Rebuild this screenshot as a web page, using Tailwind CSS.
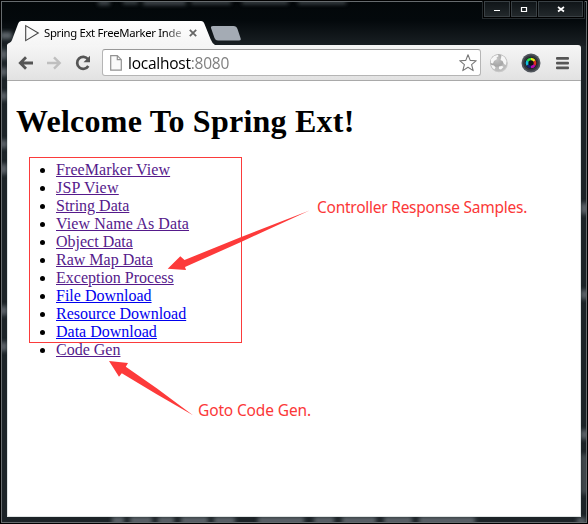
<!DOCTYPE html>
<html lang="en">
<head>
<meta charset="utf-8">
<title>Spring Ext FreeMarker Index</title>
<script src="https://cdn.jsdelivr.net/npm/@tailwindcss/browser@4"></script>
</head>
<body class="h-[524px] w-[588px] overflow-hidden bg-black">
<div class="relative flex h-[524px] w-[588px] flex-col overflow-hidden bg-[#1c2327] pr-[7px] pl-[7px]">
  <!-- glass frame -->
  <svg class="absolute inset-0" width="588" height="524" viewBox="0 0 588 524" fill="none" aria-hidden="true">
    <defs>
      <linearGradient id="top" x1="0" y1="0" x2="0" y2="1"><stop offset="0" stop-color="#030709"/><stop offset=".45" stop-color="#04090c"/><stop offset="1" stop-color="#1a2024"/></linearGradient>
      <filter id="soft" x="-50%" y="-50%" width="200%" height="200%"><feGaussianBlur stdDeviation="2"/></filter>
    </defs>
    <rect width="588" height="46" fill="url(#top)"/>
    <g filter="url(#soft)" fill="#60686d">
      <rect x="98" y="0" width="12" height="5" opacity=".7"/><rect x="123" y="0" width="15" height="4" opacity=".7"/><rect x="143" y="0" width="43" height="5" opacity=".7"/>
      <rect x="191" y="0" width="40" height="4" opacity=".7"/><rect x="242" y="0" width="46" height="4" opacity=".7"/><rect x="298" y="0" width="48" height="4" opacity=".7"/>
      <rect x="0" y="32" width="12" height="7"/><rect x="0" y="50" width="7" height="9"/><rect x="0" y="68" width="7" height="8"/><rect x="0" y="92" width="7" height="8"/>
      <rect x="0" y="140" width="7" height="8"/><rect x="0" y="164" width="7" height="10"/><rect x="0" y="306" width="7" height="9"/><rect x="0" y="342" width="7" height="9"/>
      <rect x="581" y="203" width="7" height="11"/><rect x="581" y="290" width="7" height="9"/><rect x="581" y="430" width="7" height="9"/><rect x="581" y="454" width="7" height="40" opacity=".6"/><rect x="577" y="518" width="9" height="6"/>
      <rect x="112" y="517" width="12" height="7"/><rect x="130" y="517" width="22" height="7"/><rect x="158" y="517" width="16" height="7"/><rect x="181" y="517" width="27" height="7"/><rect x="214" y="517" width="21" height="7"/><rect x="258" y="517" width="46" height="7"/><rect x="314" y="517" width="20" height="7"/><rect x="342" y="517" width="34" height="7"/><rect x="384" y="517" width="28" height="7"/><rect x="419" y="517" width="56" height="7"/>
    </g>
    <path d="M.5 0v524M587.500 0v524M0 .5h588M0 523.500h588" stroke="#000"/>
    <rect x="1.500" y="1.500" width="585" height="521" stroke="#666b6e"/>
  </svg>

  <!-- tab strip and window buttons -->
  <header class="relative flex h-[45px] shrink-0">
    <svg class="absolute top-[21px] left-0" width="236" height="24" viewBox="7 21 236 24" aria-hidden="true">
      <defs><linearGradient id="tab" x1="0" y1="0" x2="0" y2="1"><stop offset="0" stop-color="#fff"/><stop offset="1" stop-color="#f5f5f5"/></linearGradient></defs>
      <path d="M7 45q0-1.500 3-2.500c1-.5 1.500-1.500 2-2.500l6-16q1-3 3.500-3H201q2.500 0 3.500 3l6 15q1.500 4 4.500 6z" fill="url(#tab)"/>
      <path d="M213 26h20.500q3 0 4 3l3 9q1 2.500-1.500 2.500H218q-2.500 0-3.500-2.500l-3.500-10q-.5-2 2-2z" fill="#a4abb4"/>
    </svg>
    <div class="relative mt-[21px] ml-[17px] flex h-6 w-[174px] items-center">
      <svg width="16" height="18" viewBox="0 0 16 18" fill="none" stroke="#444" stroke-width="1.100"><path d="M1.700 1.600v15L14.300 9z"/></svg>
      <span class="ml-[4px] block w-[138px] bg-gradient-to-r from-black from-88% to-black/30 bg-clip-text font-['Noto_Sans',sans-serif] text-[11.3px] leading-[24px] tracking-[-0.31px] whitespace-nowrap text-transparent">Spring Ext FreeMarker Inde</span>
      <svg class="ml-[7px]" width="8" height="8" viewBox="0 0 8 8" stroke="#666" stroke-width="1.800"><path d="M.8.8l6.400 6.400M7.200.8L.8 7.200"/></svg>
    </div>
    <div class="absolute top-px left-[475px] flex h-[18px] w-[103px] gap-px border border-t-0 border-[#252b2e] bg-black p-px pt-0 [&>span]:flex [&>span]:items-center [&>span]:justify-center [&>span]:border [&>span]:border-[#394044] [&>span]:bg-gradient-to-b [&>span]:from-[#101518] [&>span]:to-[#22282b]">
      <span class="w-[26px]"><svg width="8" height="8" viewBox="0 0 8 8"><path fill="#fff" d="M1 5h6v1H1z"/></svg></span>
      <span class="w-[26px]"><svg width="8" height="8" viewBox="0 0 8 8"><path fill="none" stroke="#fff" stroke-width="1.200" d="M1.500 2.500h5v4h-5z"/></svg></span>
      <span class="flex-1"><svg width="8" height="8" viewBox="0 0 8 8" stroke="#fff" stroke-width="1.700"><path d="M1 2l6 4.500M7 2L1 6.500"/></svg></span>
    </div>
  </header>

  <!-- toolbar -->
  <nav class="relative flex h-[36px] shrink-0 items-center rounded-tr-[3px] border-b border-[#a9a9a9] bg-gradient-to-b from-[#f6f6f6] to-[#e2e2e2]">
    <svg class="ml-[11px]" width="16" height="14" viewBox="0 0 16 14" fill="none" stroke="#555" stroke-width="2.800"><path d="M15 7H3M8 1.300L2.300 7 8 12.700"/></svg>
    <svg class="ml-[12px]" width="16" height="14" viewBox="0 0 16 14" fill="none" stroke="#bfbfbf" stroke-width="2.400"><path d="M1 7h12M8 1.300L13.700 7 8 12.700"/></svg>
    <svg class="ml-[13px]" width="16" height="16" viewBox="0 0 16 16"><path d="M13 4.300A6 6 0 1 0 13.300 11" fill="none" stroke="#555" stroke-width="2.700"/><path d="M15 .8v6.500H8.500z" fill="#555"/></svg>
    <div class="ml-[11px] flex h-[27px] w-[379px] items-center rounded-[3px] border border-[#b5b5b5] border-t-[#999] bg-white">
      <svg class="ml-[7px]" width="12" height="16" viewBox="0 0 12 16" fill="#fafafa" stroke="#929292" stroke-width="1.200"><path d="M.7.7h6.600l4 4v10.500H.7zM7.300.7v4h4"/></svg>
      <span class="ml-[6px] font-['Open_Sans',sans-serif] text-[15.5px] leading-[24px] tracking-[-0.24px] whitespace-nowrap text-black">localhost<span class="text-[#808080]">:8080</span></span>
      <svg class="mr-[2px] ml-auto" width="20" height="20" viewBox="0 0 20 20" fill="#fff" stroke="#777" stroke-width="1.100" stroke-linejoin="round"><path d="M10 1.700l2.200 5.700 6.100.3-4.700 3.900 1.600 6-5.200-3.400-5.200 3.400 1.600-6-4.700-3.900 6.100-.3z"/></svg>
    </div>
    <svg class="ml-[8px]" width="20" height="20" viewBox="0 0 20 20">
      <defs><radialGradient id="globe" cx=".4" cy=".3"><stop stop-color="#c4c4c4"/><stop offset=".8" stop-color="#a6a6a6"/><stop offset="1" stop-color="#bcbcbc"/></radialGradient></defs>
      <circle cx="10" cy="10.500" r="8.800" fill="#c9c9c9"/><circle cx="9.600" cy="9.600" r="8.600" fill="url(#globe)"/>
      <path d="M2 6l3-3 4-1.200.5 1.500-2 1.200.5 1.500-3 2-1 2.500-2.300-.5zM12.500 2l3 2 2 4-.5 4-2-1-1.500-3-2-1 .5-2zM2 12l3 .500 1.500 2-1 2-2-1.500zM10 13.500l3-.5 1.500 1-2.500 2.500-2-.5z" fill="#f6f6f6"/>
    </svg>
    <svg class="ml-[12px]" width="20" height="20" viewBox="0 0 20 20">
      <circle cx="10" cy="10" r="9.500" fill="#50555c"/><circle cx="10" cy="10" r="7.800" fill="#34383e"/><circle cx="10" cy="10" r="5.800" fill="#101014"/>
      <g fill="none" stroke-width="2.600"><path d="M6.500 8A4 4 0 0 1 10 6" stroke="#2de64a"/><path d="M10 6a4 4 0 0 1 3.500 2" stroke="#e9ed20"/><path d="M13.500 8a4 4 0 0 1 0 4" stroke="#e12c20"/><path d="M13.500 12a4 4 0 0 1-3.500 2" stroke="#b50bb0"/><path d="M10 14a4 4 0 0 1-3.500-2" stroke="#182070"/><path d="M6.500 12a4 4 0 0 1 0-4" stroke="#12bfe0"/></g><circle cx="10" cy="10" r="2" fill="#111"/>
    </svg>
    <svg class="ml-[15px]" width="14" height="14" viewBox="0 0 14 14" fill="#555"><rect y="1" width="13" height="2.700" rx="1"/><rect y="5.800" width="13" height="2.700" rx="1"/><rect y="10.600" width="13" height="2.700" rx="1"/></svg>
  </nav>

  <!-- page -->
  <main class="relative h-[436px] shrink-0 border-x border-b border-[#dfe4e4] bg-white pt-[22px] pl-[8px] font-['Liberation_Serif',serif] text-black">
    <h1 class="text-[32px] leading-[37px] font-bold tracking-[0.24px]">Welcome To Spring Ext!</h1>
    <ul class="mt-[21px] list-disc pl-10 text-[16px] leading-[18px] text-black [&_a]:underline">
      <li><a class="tracking-[0.08px] text-[#551a8b]">FreeMarker View</a></li>
      <li><a class="tracking-[0.24px] text-[#551a8b]">JSP View</a></li>
      <li><a class="text-[#551a8b]">String Data</a></li>
      <li><a class="tracking-[0.12px] text-[#551a8b]">View Name As Data</a></li>
      <li><a class="text-[#551a8b]">Object Data</a></li>
      <li><a class="text-[#551a8b]">Raw Map Data</a></li>
      <li><a class="text-[#551a8b]">Exception Process</a></li>
      <li><a class="text-[#0000ee]">File Download</a></li>
      <li><a class="text-[#0000ee]">Resource Download</a></li>
      <li><a class="text-[#0000ee]">Data Download</a></li>
      <li><a class="text-[#551a8b]">Code Gen</a></li>
    </ul>
  </main>

  <!-- annotations -->
  <div class="absolute top-[157px] left-[29px] h-[186px] w-[213px] border border-[#fb3b3b]"></div>
  <svg class="absolute inset-0" width="588" height="524" viewBox="0 0 588 524" fill="#fd3a3a" aria-hidden="true">
    <path d="M167.700 268.800L180.300 256.200 184.500 260 240 237.500 309.500 210.500 241 242 185 267 186 270z"/>
    <path d="M109 361L128 363 125.800 366.800 156.700 388.300 193 415.200 156.700 394.300 121.800 373.300 119 376.800z"/>
  </svg>
  <span class="absolute top-[195px] left-[317px] font-['Noto_Sans',sans-serif] text-[15.5px] leading-[24px] tracking-[-0.25px] whitespace-nowrap text-[#fb3838]">Controller Response Samples.</span>
  <span class="absolute top-[398px] left-[198px] font-['Noto_Sans',sans-serif] text-[15.5px] leading-[24px] tracking-[-0.14px] whitespace-nowrap text-[#fb3838]">Goto Code Gen.</span>
</div>
</body>
</html>
